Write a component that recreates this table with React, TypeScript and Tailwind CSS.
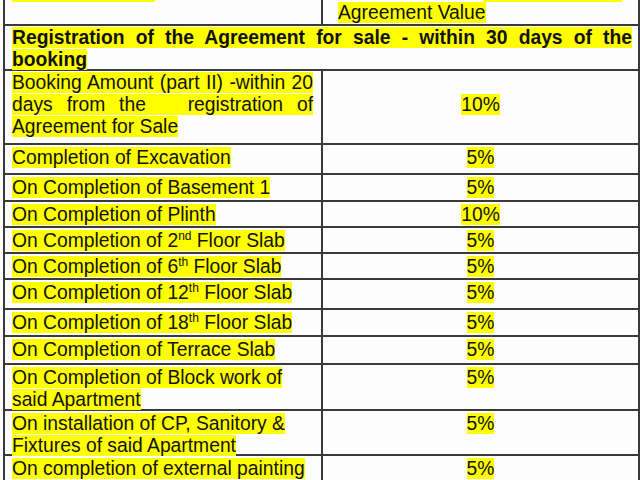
import React from "react";

const HL = ({ children }: { children: React.ReactNode }) => (
  <span className="bg-[#ffff00]">{children}</span>
);

const Sup = ({ children }: { children: React.ReactNode }) => (
  <sup className="text-[12px] relative -top-[7px] align-baseline">{children}</sup>
);

type Row = { h: string; left: React.ReactNode; right: string };

const rows: Row[] = [
  { h: "h-[30px]", left: <HL>Completion of Excavation</HL>, right: "5%" },
  { h: "h-[27px]", left: <HL>On Completion of Basement 1</HL>, right: "5%" },
  { h: "h-[26px]", left: <HL>On Completion of Plinth</HL>, right: "10%" },
  { h: "h-[26px]", left: <HL>On Completion of 2<Sup>nd</Sup> Floor Slab</HL>, right: "5%" },
  { h: "h-[26px]", left: <HL>On Completion of 6<Sup>th</Sup> Floor Slab</HL>, right: "5%" },
  { h: "h-[30px]", left: <HL>On Completion of 12<Sup>th</Sup> Floor Slab</HL>, right: "5%" },
  { h: "h-[27px]", left: <HL>On Completion of 18<Sup>th</Sup> Floor Slab</HL>, right: "5%" },
  { h: "h-[28px]", left: <HL>On Completion of Terrace Slab</HL>, right: "5%" },
  {
    h: "h-[46px]",
    left: (
      <>
        <HL>On Completion of Block work of</HL>
        <br />
        <HL>said Apartment</HL>
      </>
    ),
    right: "5%",
  },
  {
    h: "h-[45px]",
    left: (
      <>
        <HL>On installation of CP, Sanitory &amp;</HL>
        <br />
        <HL>Fixtures of said Apartment</HL>
      </>
    ),
    right: "5%",
  },
  { h: "h-[40px]", left: <HL>On completion of external painting</HL>, right: "5%" },
];

export default function App() {
  return (
    <div className="w-[640px] h-[480px] overflow-hidden bg-[#fdfdfd] text-[#111] font-['Liberation_Sans',Arial,sans-serif] text-[19.3px] leading-[22px]">
      <div className="ml-[3px] w-[637px] border-x-2 border-[#3a3a3a]">
        {/* top cut row */}
        <div className="grid grid-cols-[318px_1fr] h-[24px] overflow-hidden">
          <div className="border-r-2 border-[#3a3a3a] pl-[7px] overflow-hidden">
            <div className="-mt-[20px] h-[22px] flex">
              <div className="w-[143px] h-[22px] bg-[#ffff00]"></div>
            </div>
          </div>
          <div className="overflow-hidden pl-[15px]">
            <div className="-mt-[20px] h-[22px] flex">
              <div className="w-[145px] h-[22px]"></div>
              <div className="w-[139px] h-[22px] bg-[#ffff00]"></div>
            </div>
            <div className="whitespace-nowrap">
              <HL>Agreement Value</HL>
            </div>
          </div>
        </div>

        {/* Registration row */}
        <div className="h-[45px] border-t-2 border-[#3a3a3a] pl-[7px] pr-[6px] pt-[1px] font-bold">
          <div className="text-justify [text-align-last:justify]">
            <HL>Registration of the Agreement for sale - within 30 days of the</HL>
          </div>
          <div>
            <HL>booking</HL>
          </div>
        </div>

        {/* Booking amount row */}
        <div className="grid grid-cols-[318px_1fr] h-[74px] border-t-2 border-[#3a3a3a]">
          <div className="border-r-2 border-[#3a3a3a] pl-[7px] pr-[8px] pt-[1px]">
            <div className="text-justify [text-align-last:justify]">
              <HL>Booking Amount (part II) -within 20</HL>
            </div>
            <div className="text-justify [text-align-last:justify]">
              <HL>days from the&nbsp;&nbsp; registration of</HL>
            </div>
            <div>
              <HL>Agreement for Sale</HL>
            </div>
          </div>
          <div className="text-center pt-[23px]">
            <HL>10%</HL>
          </div>
        </div>

        {rows.map((r, i) => (
          <div
            key={i}
            className={`grid grid-cols-[318px_1fr] ${r.h} border-t-2 border-[#3a3a3a]`}
          >
            <div className="border-r-2 border-[#3a3a3a] pl-[7px] pt-[2px] whitespace-nowrap">
              {r.left}
            </div>
            <div className="text-center pt-[2px]">
              <HL>{r.right}</HL>
            </div>
          </div>
        ))}
      </div>
    </div>
  );
}
